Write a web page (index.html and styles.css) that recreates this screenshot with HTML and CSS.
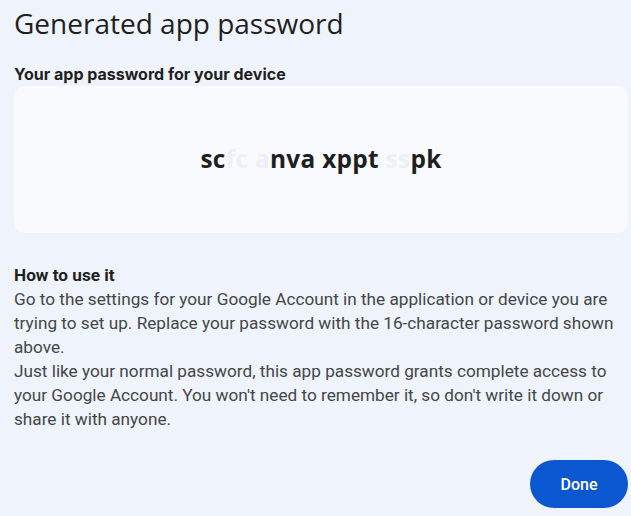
FILE: index.html
```html
<!DOCTYPE html>
<html lang="en">
<head>
<meta charset="utf-8">
<link rel="stylesheet" href="styles.css">
</head>
<body>
<div class="dialog">
  <h1 class="title">Generated app password</h1>
  <div class="label">Your app password for your device</div>
  <div class="card">
    <div class="pw">sc<span class="mask">fc</span> <span class="mask">a</span>nva xppt <span class="mask">ss</span>pk</div>
  </div>
  <div class="howto">
    <div class="howto-title">How to use it</div>
    <p class="para">Go to the settings for your Google Account in the application or device you are trying to set up. Replace your password with the 16-character password shown above.</p>
    <p class="para">Just like your normal password, this app password grants complete access to your Google Account. You won't need to remember it, so don't write it down or share it with anyone.</p>
  </div>
  <div class="actions">
    <button class="done">Done</button>
  </div>
</div>
</body>
</html>
```
FILE: styles.css
```css
html, body {
  margin: 0;
  padding: 0;
  background: #eef3fc;
}
body {
  font-family: Roboto, "Liberation Sans", sans-serif;
  color: #1f1f1f;
}
.dialog {
  width: 631px;
  height: 516px;
  box-sizing: border-box;
  padding: 4px 3px 0 14px;
  display: flex;
  flex-direction: column;
}
.title {
  margin: 0;
  font-family: "Open Sans", Roboto, sans-serif;
  font-weight: 400;
  font-size: 28px;
  line-height: 38px;
  color: #1f1f1f;
}
.label {
  margin-top: 22px;
  font-family: Inter, Roboto, sans-serif;
  font-size: 16px;
  font-weight: 700;
  line-height: 20px;
  color: #1f1f1f;
}
.card {
  margin-top: 2px;
  height: 147px;
  background: #f8fafd;
  border-radius: 10px;
  display: flex;
  align-items: center;
  justify-content: center;
}
.pw {
  font-family: "Open Sans", Roboto, sans-serif;
  font-weight: 700;
  font-size: 24.4px;
  letter-spacing: 0.3px;
  line-height: 30px;
  margin-bottom: 2px;
  color: #1f1f1f;
}
.mask {
  color: #eceff4;
}
.howto {
  margin-top: 30px;
  color: #444746;
}
.howto-title {
  font-size: 17.2px;
  font-weight: 700;
  color: #1f1f1f;
  line-height: 24px;
}
.para {
  margin: 0;
  font-size: 17.2px;
  line-height: 24px;
}
.actions {
  margin-top: auto;
  margin-bottom: 8px;
  display: flex;
  justify-content: flex-end;
}
.done {
  width: 98px;
  height: 48px;
  border: none;
  border-radius: 24px;
  background: #0b57d0;
  color: #ffffff;
  font-family: Roboto, sans-serif;
  font-size: 16px;
  font-weight: 500;
}
```
